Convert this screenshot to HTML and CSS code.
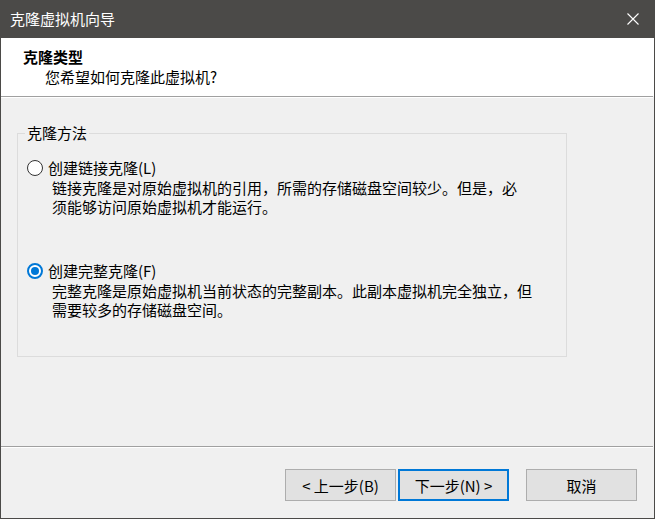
FILE: index.html
```html
<!DOCTYPE html>
<html lang="zh-CN">
<head>
<meta charset="utf-8">
<title>克隆虚拟机向导</title>
<link rel="stylesheet" href="styles.css">
</head>
<body>
<div class="window">
  <div class="titlebar">
    <span class="title">克隆虚拟机向导</span>
    <svg class="close" width="12" height="12" viewBox="0 0 12 12"><path d="M0.5 0.5L11.5 11.5M11.5 0.5L0.5 11.5" stroke="#fff" stroke-width="1.1" fill="none"/></svg>
  </div>
  <div class="header">
    <div class="h-title">克隆类型</div>
    <div class="h-sub">您希望如何克隆此虚拟机?</div>
  </div>
  <div class="sep"></div>
  <div class="content">
    <fieldset class="group">
      <legend class="legend">克隆方法</legend>
      <div class="option">
        <div class="opt-label"><span class="radio"></span>创建链接克隆(L)</div>
        <div class="opt-desc">链接克隆是对原始虚拟机的引用，所需的存储磁盘空间较少。但是，必<br>须能够访问原始虚拟机才能运行。</div>
      </div>
      <div class="option second">
        <div class="opt-label"><span class="radio checked"></span>创建完整克隆(F)</div>
        <div class="opt-desc">完整克隆是原始虚拟机当前状态的完整副本。此副本虚拟机完全独立，但<br>需要较多的存储磁盘空间。</div>
      </div>
    </fieldset>
  </div>
  <div class="sep"></div>
  <div class="footer">
    <button class="btn">&lt; 上一步(B)</button>
    <button class="btn primary">下一步(N) &gt;</button>
    <button class="btn cancel">取消</button>
  </div>
</div>
</body>
</html>
```

FILE: styles.css
```css
html, body {
  margin: 0;
  padding: 0;
  background: #f0f0f0;
}
body {
  font-family: "Noto Sans CJK SC", "Noto Sans", sans-serif;
  font-size: 15px;
  color: #000;
}
.window {
  width: 655px;
  height: 519px;
  box-sizing: border-box;
  border: 1px solid #4b4a48;
  border-top: 0;
  display: flex;
  flex-direction: column;
  background: #f0f0f0;
}
.titlebar {
  height: 38px;
  flex: none;
  background: #4b4a48;
  display: flex;
  align-items: center;
  justify-content: space-between;
  padding: 0 15px 0 9px;
  box-sizing: border-box;
}
.title {
  color: #fff;
  font-size: 15px;
  line-height: 20px;
  margin-top: -1px;
}
.close {
  display: block;
}
.header {
  height: 58px;
  flex: none;
  background: #fff;
  box-sizing: border-box;
  padding: 9px 0 0 22px;
}
.h-title {
  font-weight: bold;
  line-height: 20px;
}
.h-sub {
  line-height: 20px;
  padding-left: 22px;
}
.sep {
  height: 1px;
  flex: none;
  background: #a0a0a0;
  border-bottom: 1px solid #fff;
  margin-right: 1px;
}
.content {
  flex: 1;
  padding: 25px 0 0 16px;
}
.group {
  margin: 0;
  width: 550px;
  height: 234px;
  box-sizing: border-box;
  border: 1px solid #dcdcdc;
  padding: 0 0 0 9px;
}
.legend {
  margin-left: -2px;
  padding: 0 2px;
  line-height: 20px;
}
.option {
  padding-top: 15px;
}
.option.second {
  padding-top: 45px;
}
.opt-label {
  display: flex;
  align-items: center;
  line-height: 20px;
  white-space: nowrap;
}
.radio {
  width: 16px;
  height: 16px;
  box-sizing: border-box;
  border: 1px solid #333;
  border-radius: 50%;
  background: #fff;
  margin-right: 5px;
  flex: none;
  position: relative;
}
.radio.checked {
  border: 2px solid #0078d7;
}
.radio.checked::after {
  content: "";
  position: absolute;
  left: 2px;
  top: 2px;
  width: 8px;
  height: 8px;
  border-radius: 50%;
  background: #0078d7;
}
.opt-desc {
  padding-left: 25px;
  line-height: 19px;
  white-space: nowrap;
}
.footer {
  height: 70px;
  flex: none;
  display: flex;
  align-items: flex-start;
  padding: 21px 17px 0 0;
  box-sizing: border-box;
  justify-content: flex-end;
}
.btn {
  width: 111px;
  height: 32px;
  box-sizing: border-box;
  background: #e1e1e1;
  border: 1px solid #adadad;
  font-family: "Noto Sans CJK SC", "Noto Sans", sans-serif;
  font-size: 15px;
  color: #000;
  padding: 0;
  margin: 0 0 0 2px;
}
.btn.primary {
  border: 2px solid #0078d7;
}
.btn.cancel {
  margin-left: 17px;
}
```
